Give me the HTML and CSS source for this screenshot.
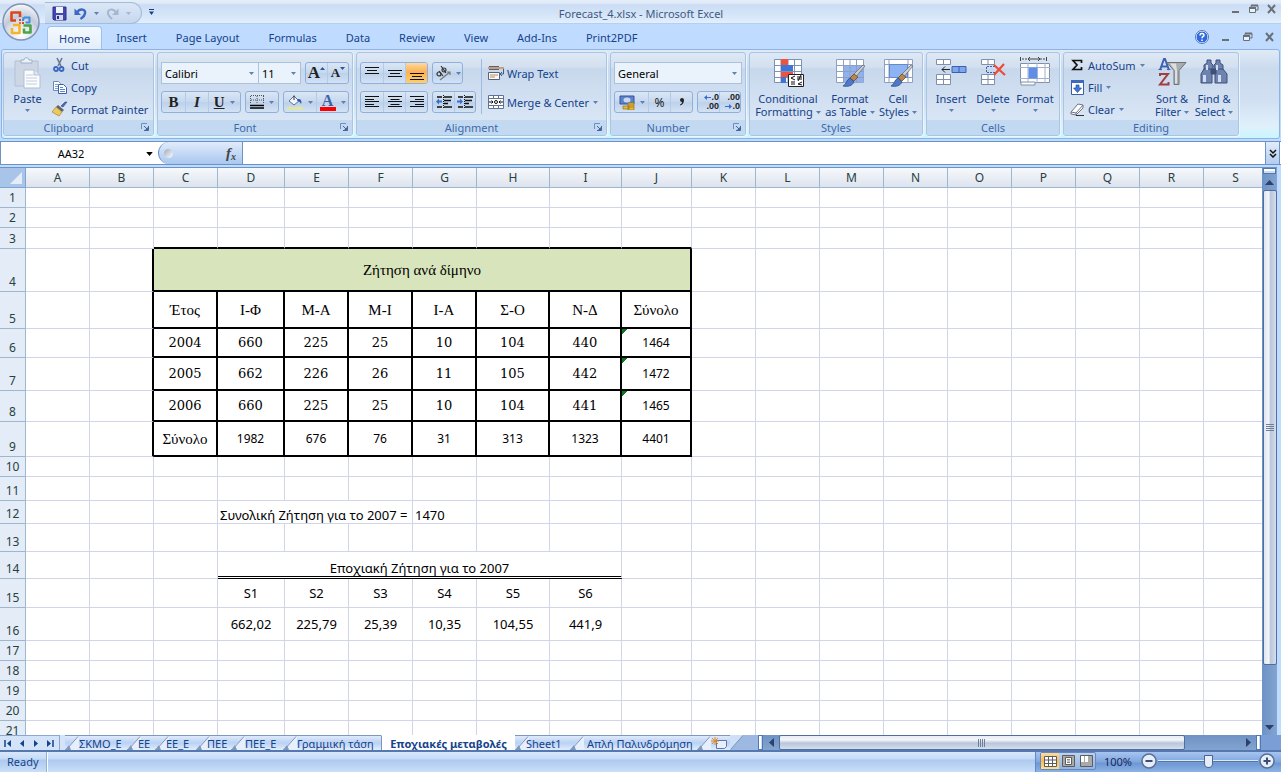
FILE: index.html
```html
<!DOCTYPE html>
<html lang="en">
<head>
<meta charset="utf-8">
<title>Forecast_4.xlsx - Microsoft Excel</title>
<link rel="stylesheet" href="styles.css">
</head>
<body>
<svg class="defs" width="0" height="0" aria-hidden="true">
  <symbol id="dn" viewBox="0 0 5 3"><path d="M0 0h5L2.500 3z" fill="currentColor"/></symbol>
  <symbol id="launch" viewBox="0 0 8 8"><path d="M.5 6V.5H6" fill="none" stroke="#6d8fc0"/><path d="M3 3l3 3M7.500 3v4.500H3" fill="none" stroke="#44679c"/><path d="M7 4v3H4z" fill="#44679c"/></symbol>
  <symbol id="min" viewBox="0 0 11 10"><path d="M2 8h7" stroke="#6b6f78" stroke-width="2"/></symbol>
  <symbol id="restore" viewBox="0 0 11 10"><path d="M3 3V1.500h7V6H8" fill="none" stroke="#6b6f78"/><path d="M1.500 4.500h6v4h-6z" fill="#e9f1fb" stroke="#6b6f78"/><path d="M3 1.500h7M1 4h7" stroke="#6b6f78" stroke-width="2"/></symbol>
  <symbol id="close" viewBox="0 0 11 10"><path d="M2 1l7 8M9 1L2 9" stroke="#6b6f78" stroke-width="2"/></symbol>
  <symbol id="brush" viewBox="0 0 32 32"><path d="M31 9l-11 13-3-2L29 8z" fill="#c9ccd2" stroke="#6a6f7a" stroke-width=".8"/><path d="M20 17l4 3-4 4-4-3z" fill="#b98650" stroke="#6f4a25" stroke-width=".8"/><path d="M16 21l4 4c-2 4-6 5-11 4 4-2 3-6 7-8z" fill="#4f79c8" stroke="#2b4c8c" stroke-width=".8"/></symbol>
  <symbol id="slash" viewBox="0 0 14 14"><path d="M0 14L13 .5h1V14z" fill="#e6effb"/><path d="M0 14l2-1L13 .5" fill="none" stroke="#7d97bf"/><path d="M0 14l4-5 2 5z" fill="#7e98c0"/></symbol>
  <symbol id="slashend" viewBox="0 0 14 14"><path d="M0 0h13L1 14H0z" fill="#cfe0f6"/><path d="M1 14L13 .5" stroke="#7d97bf"/></symbol>
</svg>

<div class="app">
  <header class="titlebar">
    <button class="orb" aria-label="Office Button">
      <svg width="38" height="38" viewBox="0 0 38 38">
        <defs><radialGradient id="og" cx=".5" cy=".85" r=".9"><stop offset="0" stop-color="#fff"/><stop offset=".45" stop-color="#d5dbe8"/><stop offset=".55" stop-color="#c3c9da"/><stop offset="1" stop-color="#fff"/></radialGradient></defs>
        <circle cx="19" cy="19" r="18" fill="url(#og)" stroke="#7f93b2" stroke-width="1.500"/>
        <g fill="none" stroke-width="2.600" stroke-linejoin="round">
          <path d="M14 17.500H9.500V9.500h8.500V14" stroke="#d9481c"/>
          <path d="M22 14.500h5.500v5H23.500M21.500 14v3" stroke="#3f8edc" stroke-width="2"/>
          <path d="M11 22h6.500v8H10v-5" stroke="#f4b52a"/>
          <path d="M21.500 22.500h7v7H22v-4" stroke="#4ba446"/>
        </g>
        <path d="M17 16h2v2h-2z" fill="#d9481c"/><path d="M20 16h2v2h-2z" fill="#3f8edc"/><path d="M17 19h2v2h-2z" fill="#e8701f"/><path d="M20 19h2v2h-2z" fill="#d9481c"/>
      </svg>
    </button>
    <div class="qat">
      <button aria-label="Save"><svg width="15" height="15" viewBox="0 0 15 15"><path d="M1 1h13v13H2l-1-1z" fill="#4546b0" stroke="#2f2f86"/><path d="M4 1h7v6H4z" fill="#eef3fd"/><path d="M4 9h7v5H4z" fill="#d4d8ee"/><path d="M5 10h2v3H5z" fill="#2f2f86"/></svg></button>
      <button aria-label="Undo"><svg width="13" height="13" viewBox="0 0 13 13"><path d="M3 5.500C6 1 12 2 11 6.500 10.500 9.500 8.500 10.500 6.500 12" fill="none" stroke="#3b68c4" stroke-width="2.400"/><path d="M.5 1.500v6.500H7z" fill="#3b68c4"/></svg></button>
      <button aria-label="Undo list" class="arr"><svg width="5" height="3"><use href="#dn"/></svg></button>
      <button aria-label="Redo" class="off"><svg width="13" height="13" viewBox="0 0 13 13"><path d="M10 5.500C7 1 1 2 2 6.500 2.500 9.500 4.500 10.500 6 12" fill="none" stroke="#a7b6cf" stroke-width="2"/><path d="M12.500 1.500v6.500H6z" fill="#a7b6cf"/></svg></button>
      <button aria-label="Redo list" class="arr off"><svg width="5" height="3"><use href="#dn"/></svg></button>
    </div>
    <button class="qatmore" aria-label="Customize"><svg width="5" height="6" viewBox="0 0 5 6"><path d="M0 .5h5" stroke="#15428b"/><path d="M0 2.500h5L2.500 6z" fill="#15428b"/></svg></button>
    <h1>Forecast_4.xlsx - Microsoft Excel</h1>
    <div class="winbtns">
      <button aria-label="Minimize"><svg width="11" height="10"><use href="#min"/></svg></button>
      <button aria-label="Restore"><svg width="11" height="10"><use href="#restore"/></svg></button>
      <button aria-label="Close"><svg width="11" height="10"><use href="#close"/></svg></button>
    </div>
  </header>

  <nav class="tabs">
    <button class="tab active">Home</button>
    <button class="tab">Insert</button>
    <button class="tab">Page Layout</button>
    <button class="tab">Formulas</button>
    <button class="tab">Data</button>
    <button class="tab">Review</button>
    <button class="tab">View</button>
    <button class="tab">Add-Ins</button>
    <button class="tab">Print2PDF</button>
    <div class="docbtns">
      <button aria-label="Help"><svg width="14" height="14" viewBox="0 0 14 14"><circle cx="7" cy="7" r="6" fill="#2f6be0" stroke="#fff"/><circle cx="7" cy="7" r="6.500" fill="none" stroke="#5578b5"/><path d="M5 5.500c0-3 4-2.500 4-.3C9 6.500 7 6.500 7 8.200" fill="none" stroke="#fff" stroke-width="1.500"/><path d="M6.200 9.500h1.600V11H6.200z" fill="#fff"/></svg></button>
      <button aria-label="Minimize window"><svg width="11" height="10"><use href="#min"/></svg></button>
      <button aria-label="Restore window"><svg width="11" height="10"><use href="#restore"/></svg></button>
      <button aria-label="Close window"><svg width="11" height="10"><use href="#close"/></svg></button>
    </div>
  </nav>

  <section class="ribbon">
    <div class="group g-clip">
      <div class="body">
        <button class="big">
          <svg width="32" height="32" viewBox="0 0 32 32"><path d="M3 4h23v25H3z" fill="#ccd6e5" stroke="#b4c1d5"/><path d="M9 6V3h3c0-3 5-3 5 0h3v3z" fill="#eef2f8" stroke="#9eafc8"/><path d="M12 13h10l6 5v13H12z" fill="#fbfcfe" stroke="#b3bfd2"/><path d="M22 13v5h6" fill="#dfe6f1" stroke="#b3bfd2"/><path d="M14 18h7M14 21h11M14 24h11M14 27h11" stroke="#c3cedf"/></svg>
          <span>Paste</span><svg class="caret" width="5" height="3"><use href="#dn"/></svg>
        </button>
        <div class="smalls">
          <button><svg width="16" height="16" viewBox="0 0 16 16"><path d="M5 1l4 8M10 1L6 9" stroke="#6a7890" stroke-width="1.600"/><circle cx="4" cy="12" r="2" fill="none" stroke="#3a66bd" stroke-width="1.800"/><circle cx="9.500" cy="12" r="2" fill="none" stroke="#3a66bd" stroke-width="1.800"/></svg>Cut</button>
          <button><svg width="16" height="16" viewBox="0 0 16 16"><path d="M1.500 2.500h5l2 2v7h-7z" fill="#fff" stroke="#6c87b8"/><path d="M3 5.500h3M3 7.500h4M3 9.500h4" stroke="#7fa0da"/><path d="M6.500 5.500h5l3 3v6h-8z" fill="#fff" stroke="#3f5fa8"/><path d="M8 8.500h3M8 10.500h5M8 12.500h5" stroke="#5b84d2"/></svg>Copy</button>
          <button><svg width="16" height="16" viewBox="0 0 16 16"><path d="M15 1l-4 5-2-1 4-4z" fill="#4c69b0" stroke="#2f4987" stroke-width=".6"/><path d="M6 4l6 5-2 2-6-5z" fill="#5b6378"/><path d="M4 6l6 5-3 4-7-4z" fill="#ecc95c" stroke="#a9832c" stroke-width=".7"/></svg>Format Painter</button>
        </div>
      </div>
      <footer>Clipboard<button aria-label="Clipboard options"><svg width="8" height="8"><use href="#launch"/></svg></button></footer>
    </div>

    <div class="group g-font">
      <div class="body rows">
        <div class="row">
          <div class="combos">
            <label class="combo"><select aria-label="Font"><option>Calibri</option></select><svg width="5" height="3"><use href="#dn"/></svg></label>
            <label class="combo size"><select aria-label="Font size"><option>11</option></select><svg width="5" height="3"><use href="#dn"/></svg></label>
          </div>
          <div class="set"><button class="glyph grow" aria-label="Grow font">A<svg width="5" height="3" viewBox="0 0 5 3"><path d="M0 3h5L2.500 0z" fill="#2f5597"/></svg></button><button class="glyph shrink" aria-label="Shrink font">A<svg width="5" height="3" viewBox="0 0 5 3"><path d="M0 0h5L2.500 3z" fill="#2f5597"/></svg></button></div>
        </div>
        <div class="row">
          <div class="set biu"><button class="glyph"><b>B</b></button><button class="glyph"><i>I</i></button><button class="glyph split"><u>U</u><svg width="5" height="3"><use href="#dn"/></svg></button></div>
          <div class="set"><button class="w34 split" aria-label="Borders"><svg width="14" height="14" viewBox="0 0 14 14"><path d="M.5 1v8M7 1v8M13.500 1v8M1 .5h13M1 5h13" stroke="#555" stroke-dasharray="1 1"/><path d="M0 10.500h14M0 13h14" stroke="#000" stroke-width="1.500"/></svg><svg width="5" height="3"><use href="#dn"/></svg></button></div>
          <div class="set"><button class="w33 split" aria-label="Fill color"><svg width="16" height="16" viewBox="0 0 16 16"><path d="M2 7l5-5 5 5-5 4z" fill="#f2f6fc" stroke="#5b7294"/><path d="M7 6V1.500" stroke="#333"/><path d="M11 5c3 0 4 2 3 5-1-2-2-3-4-3z" fill="#2e59b4"/><path d="M0 13h16v3H0z" fill="#dfe7a4"/></svg><svg width="5" height="3"><use href="#dn"/></svg></button><button class="w33 split fontcolor" aria-label="Font color"><span>A</span><svg width="5" height="3"><use href="#dn"/></svg></button></div>
        </div>
      </div>
      <footer>Font<button aria-label="Font options"><svg width="8" height="8"><use href="#launch"/></svg></button></footer>
    </div>

    <div class="group g-align">
      <div class="body">
        <div class="rows">
          <div class="row">
            <div class="set w23"><button aria-label="Top align"><svg width="14" height="16" viewBox="0 0 14 16"><path d="M0 2.500h14M2 5.500h10M0 8.500h14" stroke="#111"/></svg></button><button aria-label="Middle align"><svg width="14" height="16" viewBox="0 0 14 16"><path d="M0 5.500h14M2 8.500h10M0 11.500h14" stroke="#111"/></svg></button><button class="on" aria-label="Bottom align"><svg width="14" height="16" viewBox="0 0 14 16"><path d="M0 8.500h14M2 11.500h10M0 14.500h14" stroke="#111"/></svg></button></div>
            <div class="set"><button class="w30 split" aria-label="Orientation"><svg width="16" height="16" viewBox="0 0 16 16"><g fill="none" stroke="#333" stroke-width="1.200"><circle cx="4" cy="9" r="2"/><path d="M4 6l4 5M6 1l5 7"/><circle cx="9" cy="5" r="2"/><path d="M5 15L15 7M15 10V7h-3" stroke="#777"/></g></svg><svg width="5" height="3"><use href="#dn"/></svg></button></div>
          </div>
          <div class="row">
            <div class="set w23"><button aria-label="Align left"><svg width="14" height="14" viewBox="0 0 14 14"><path d="M0 1.500h14M0 4.500h9M0 6.500h14M0 9.500h9M0 11.500h14" stroke="#111"/></svg></button><button aria-label="Center"><svg width="14" height="14" viewBox="0 0 14 14"><path d="M0 1.500h14M2.500 4.500h9M0 6.500h14M2.500 9.500h9M0 11.500h14" stroke="#111"/></svg></button><button aria-label="Align right"><svg width="14" height="14" viewBox="0 0 14 14"><path d="M0 1.500h14M5 4.500h9M0 6.500h14M5 9.500h9M0 11.500h14" stroke="#111"/></svg></button></div>
            <div class="set w22"><button aria-label="Decrease indent"><svg width="16" height="14" viewBox="0 0 16 14"><path d="M1 2h5M8 2h8M8 5.500h7M8 8.500h4M1 12h5M8 12h8" stroke="#111" stroke-width="1.500"/><path d="M7.500 0v14" stroke="#111" stroke-dasharray="1 1"/><path d="M0 6.500l3-3v2h3v2H3v2z" fill="#3c6cd0"/></svg></button><button aria-label="Increase indent"><svg width="16" height="14" viewBox="0 0 16 14"><path d="M1 2h5M8 2h8M8 5.500h7M8 8.500h4M1 12h5M8 12h8" stroke="#111" stroke-width="1.500"/><path d="M7.500 0v14" stroke="#111" stroke-dasharray="1 1"/><path d="M6 6.500l-3-3v2H0v2h3v2z" fill="#3c6cd0"/></svg></button></div>
          </div>
        </div>
        <div class="texts">
          <button><svg width="16" height="16" viewBox="0 0 16 16"><path d="M1 1.500h10M1 4.500h10" stroke="#55617a"/><path d="M0 3h16" stroke="#c58a4c" stroke-width="1.500"/><path d="M.5 7.500h11v7H.5z" fill="#f6f8fb" stroke="#55617a"/><path d="M2 10h8M2 12h5" stroke="#c58a4c"/><path d="M15.500 4v5h-3M14 7l-2 2 2 2" fill="none" stroke="#3f5b8c"/></svg>Wrap Text</button>
          <button><svg width="16" height="16" viewBox="0 0 16 16"><path d="M.5 1.500h15v13H.5z" fill="#fff" stroke="#5c7299"/><path d="M0 4.500h16M0 11.500h16M5.500 1v3M10.500 1v3M5.500 12v3M10.500 12v3" stroke="#5c7299"/><path d="M1 8h4M15 8h-4M3.500 6.500L5 8 3.500 9.500M12.500 6.500L11 8l1.500 1.500" fill="none" stroke="#111"/><circle cx="8" cy="8" r="1.500" fill="none" stroke="#111"/></svg>Merge &amp; Center<svg class="gapl" width="5" height="3"><use href="#dn"/></svg></button>
        </div>
      </div>
      <footer>Alignment<button aria-label="Alignment options"><svg width="8" height="8"><use href="#launch"/></svg></button></footer>
    </div>

    <div class="group g-num">
      <div class="body rows">
        <label class="combo full"><select aria-label="Number format"><option>General</option></select><svg width="5" height="3"><use href="#dn"/></svg></label>
        <div class="row">
          <div class="set"><button class="w34 split" aria-label="Accounting format"><svg width="16" height="16" viewBox="0 0 16 16"><path d="M1 2h14v8H1z" fill="#5e83c9" stroke="#33559d"/><ellipse cx="8" cy="6" rx="3.500" ry="2.500" fill="#c8d8f2"/><path d="M9 9h6v7H9zM4 12h6v3H4z" fill="#e9b93a" stroke="#9a7313" stroke-width=".7"/><path d="M9 11h6M9 13h6" stroke="#9a7313" stroke-width=".7"/></svg><svg width="5" height="3"><use href="#dn"/></svg></button><button class="w22b pct">%</button><button class="w22b" aria-label="Comma style"><svg width="6" height="8" viewBox="0 0 6 8"><path d="M3 0a2 2 0 0 1 2 2C5 4.500 4 6.500 1.500 7.500L1 6.500C2.500 6 3 5 3 4A2 2 0 0 1 3 0z" fill="#222"/></svg></button></div>
          <div class="set w22"><button class="dec" aria-label="Increase decimal"><span><svg width="7" height="5" viewBox="0 0 7 5"><path d="M0 2.500L3 0v2h4v1H3v2z" fill="#3c6cd0"/></svg>.0</span><span>.00</span></button><button class="dec" aria-label="Decrease decimal"><span>.00</span><span><svg width="7" height="5" viewBox="0 0 7 5"><path d="M7 2.500L4 0v2H0v1h4v2z" fill="#3c6cd0"/></svg>.0</span></button></div>
        </div>
      </div>
      <footer>Number<button aria-label="Number options"><svg width="8" height="8"><use href="#launch"/></svg></button></footer>
    </div>

    <div class="group g-styles">
      <div class="body">
        <button class="big">
          <svg width="32" height="32" viewBox="0 0 32 32"><path d="M2.500 2.500h27v23h-27z" fill="#fff" stroke="#7d90b5"/><path d="M9 2v24M16 2v24M22.500 2v24M2 8.500h28M2 14.500h28M2 20.500h28" stroke="#7d90b5"/><path d="M9 2h7v6H9zM9 15h12v5H9z" fill="#ee5340"/><path d="M9 8h12v6H9zM9 20h5v6H9z" fill="#3f74d8"/><path d="M16.500 17.500h15v12h-15z" fill="#fff" stroke="#222"/><path d="M23 19l-4 2 4 2M19 25h4M19 27h4M25 20h5M25 22h5M29 18l-3 6M30 25l-4 2 4 1" fill="none" stroke="#111"/></svg>
          <span>Conditional<br>Formatting <svg width="5" height="3"><use href="#dn"/></svg></span>
        </button>
        <button class="big w54">
          <svg width="32" height="32" viewBox="0 0 32 32"><path d="M2.500 2.500h27v23h-27z" fill="#fff" stroke="#8ea0c2"/><path d="M9.500 8.500h20v17h-20z" fill="#8fb2ee"/><path d="M9.500 2v24M16 2v24M22.500 2v24M2 8.500h28M2 14.500h28M2 20.500h28" stroke="#8ea0c2"/><use href="#brush"/></svg>
          <span>Format<br>as Table <svg width="5" height="3"><use href="#dn"/></svg></span>
        </button>
        <button class="big">
          <svg width="32" height="32" viewBox="0 0 32 32"><path d="M2.500 2.500h28v23h-28z" fill="#fff" stroke="#8ea0c2"/><path d="M7 2v24M26 2v24M2 7.500h29M2 20.500h29" stroke="#8ea0c2"/><path d="M7.500 7.500h18v13h-18z" fill="#8db3f3" stroke="#6588c6"/><use href="#brush"/></svg>
          <span>Cell<br>Styles <svg width="5" height="3"><use href="#dn"/></svg></span>
        </button>
      </div>
      <footer>Styles</footer>
    </div>

    <div class="group g-cells">
      <div class="body">
        <button class="big w42"><svg width="32" height="32" viewBox="0 0 32 32"><path d="M1.500 2.500h14v5h-14zM1.500 17.500h14v10h-14z" fill="#fff" stroke="#8090ab"/><path d="M8.500 2v5M8.500 17v11M1 22.500h15" stroke="#8090ab"/><path d="M17 9.500h14v6H17z" fill="#7fa6ec" stroke="#3a5fae"/><path d="M24 9v7" stroke="#3a5fae"/><path d="M15 12.500H7M10 9.500l-3 3 3 3" fill="none" stroke="#222"/></svg><span>Insert</span><svg class="caret" width="5" height="3"><use href="#dn"/></svg></button>
        <button class="big w42"><svg width="32" height="32" viewBox="0 0 32 32"><path d="M4.500 2.500h13v5h-13zM4.500 17.500h13v10h-13z" fill="#fff" stroke="#8090ab"/><path d="M11 2v5M11 17v11M4 22.500h14" stroke="#8090ab"/><path d="M18 9.500H9.500v6H18" fill="none" stroke="#3a5fae" stroke-dasharray="2 1"/><path d="M17 8l11 10M27 7L17 18" stroke="#ee4a36" stroke-width="2.200"/></svg><span>Delete</span><svg class="caret" width="5" height="3"><use href="#dn"/></svg></button>
        <button class="big w42"><svg width="32" height="32" viewBox="0 0 32 32"><path d="M1.500 0v4M27.500 0v4" stroke="#444"/><path d="M3 2h7M21 2h6" stroke="#444" stroke-dasharray="2 1"/><path d="M9 2h12M11 0L9 2l2 2M19 0l2 2-2 2" fill="none" stroke="#444"/><path d="M1.500 6.500h29v19h-29z" fill="#fff" stroke="#8090ab"/><path d="M2 28h14v-3h-14z" fill="#fff" stroke="#8090ab"/><path d="M9 6v20M18 6v20M26 6v20M1 10.500h30M1 21.500h30" stroke="#a3b2cf"/><path d="M9.500 10.500h9v11h-9z" fill="#5f8ee4"/></svg><span>Format</span><svg class="caret" width="5" height="3"><use href="#dn"/></svg></button>
      </div>
      <footer>Cells</footer>
    </div>

    <div class="group g-edit">
      <div class="body">
        <div class="smalls">
          <button><svg width="16" height="16" viewBox="0 0 16 16"><path d="M12.500 6V3.500H4L8 8l-4 4.500h8.500V10" fill="none" stroke="#111" stroke-width="1.700"/></svg>AutoSum<svg class="gapl" width="5" height="3"><use href="#dn"/></svg></button>
          <button><svg width="16" height="16" viewBox="0 0 16 16"><path d="M2.500 1.500h12v14h-12z" fill="#fff" stroke="#3e5f9e"/><path d="M2 1h13v3H2z" fill="#3f69bd"/><path d="M7 6h3v3h2.500l-4 4.500-4-4.500H7z" fill="#3f77de" stroke="#2a4f9c" stroke-width=".7"/></svg>Fill<svg class="gapl" width="5" height="3"><use href="#dn"/></svg></button>
          <button><svg width="16" height="16" viewBox="0 0 16 16"><path d="M2 11l7-8 5 1v3l-7 7-5-1z" fill="#fff" stroke="#6c7587"/><path d="M2 11l5 1 7-8M7 12v2" fill="none" stroke="#6c7587"/><path d="M7 14.500h8" stroke="#333"/></svg>Clear<svg class="gapl" width="5" height="3"><use href="#dn"/></svg></button>
        </div>
        <button class="big w42">
          <svg width="32" height="32" viewBox="0 0 32 32"><path d="M4 13L8 2h1l4 11M5 9.500h6.500" fill="none" stroke="#3d63b0" stroke-width="2"/><path d="M2.500 12.500H6M11 12.500h3.500" stroke="#3d63b0"/><path d="M4 19v-2h8L4 27.500h8.500V25" fill="none" stroke="#a33c40" stroke-width="2"/><path d="M11 5.500h19l-7 8v14h-5v-14z" fill="#a9acb0" stroke="#6e7277"/><path d="M14 6.500h6l1 7v13h-2v-13z" fill="#dcdee0"/></svg>
          <span>Sort &amp;<br>Filter <svg width="5" height="3"><use href="#dn"/></svg></span>
        </button>
        <button class="big w42">
          <svg width="32" height="32" viewBox="0 0 32 32"><g fill="#6e83b0" stroke="#3f5078"><path d="M9 3h4v3l2 2v7H6V8l3-2zM18 3h4v3l3 2v7h-9V8l2-2z"/><path d="M3 17l3-5h8v14H3zM17 12h8l4 5v9H17z"/><path d="M13 12h5v5h-5z" fill="#3f5078"/></g><path d="M5 18h3v7H5zM20 18h3v7h-3zM8 8h2v5H8zM18 8h2v5h-2z" fill="#d3dcee"/></svg>
          <span>Find &amp;<br>Select <svg width="5" height="3"><use href="#dn"/></svg></span>
        </button>
      </div>
      <footer>Editing</footer>
    </div>
  </section>

  <div class="formulabar">
    <label class="namebox"><input type="text" value="AA32" aria-label="Name Box"><svg width="7" height="4" viewBox="0 0 5 3"><use href="#dn"/></svg></label>
    <div class="fx"><span class="knob"></span><button aria-label="Insert Function"><i>f<sub>x</sub></i></button></div>
    <input class="formula" type="text" aria-label="Formula">
    <button class="expand" aria-label="Expand formula bar"><svg width="8" height="9" viewBox="0 0 8 9"><path d="M1 1l3 3 3-3M1 5l3 3 3-3" fill="none" stroke="#111" stroke-width="1.500"/></svg></button>
  </div>

  <main class="sheet">
    <div class="gridwrap">
      <table class="grid">
        <colgroup><col class="ch"><col span="3"><col class="c67"><col span="3"><col class="c73"><col class="c72"><col class="c70"><col span="9"></colgroup>
        <thead><tr><th class="corner"><svg width="12" height="12" viewBox="0 0 12 12"><path d="M12 0v12H0z" fill="#e4ecf7"/></svg></th><th>A<th>B<th>C<th>D<th>E<th>F<th>G<th>H<th>I<th>J<th>K<th>L<th>M<th>N<th>O<th>P<th>Q<th>R<th>S</tr></thead>
        <tbody>
        <tr class="h20"><th>1<td><td><td><td><td><td><td><td><td><td><td><td><td><td><td><td><td><td><td></tr>
        <tr class="h20"><th>2<td><td><td><td><td><td><td><td><td><td><td><td><td><td><td><td><td><td><td></tr>
        <tr class="h21"><th>3<td><td><td class="t"><td class="t"><td class="t"><td class="t"><td class="t"><td class="t"><td class="t"><td class="t"><td><td><td><td><td><td><td><td><td></tr>
        <tr class="h43"><th>4<td><td class="edge"><td colspan="8" class="k title">Ζήτηση ανά δίμηνο<td><td><td><td><td><td><td><td><td></tr>
        <tr class="h37 head"><th>5<td><td class="edge"><td class="k">Έτος<td class="k">Ι-Φ<td class="k">Μ-Α<td class="k">Μ-Ι<td class="k">Ι-Α<td class="k">Σ-Ο<td class="k">Ν-Δ<td class="k">Σύνολο<td><td><td><td><td><td><td><td><td></tr>
        <tr class="h29"><th>6<td><td class="edge"><td class="k">2004<td class="k">660<td class="k">225<td class="k">25<td class="k">10<td class="k">104<td class="k">440<td class="k sum flag">1464<td><td><td><td><td><td><td><td><td></tr>
        <tr class="h33"><th>7<td><td class="edge"><td class="k">2005<td class="k">662<td class="k">226<td class="k">26<td class="k">11<td class="k">105<td class="k">442<td class="k sum flag">1472<td><td><td><td><td><td><td><td><td></tr>
        <tr class="h31"><th>8<td><td class="edge"><td class="k">2006<td class="k">660<td class="k">225<td class="k">25<td class="k">10<td class="k">104<td class="k">441<td class="k sum flag">1465<td><td><td><td><td><td><td><td><td></tr>
        <tr class="h35"><th>9<td><td class="edge"><td class="k name">Σύνολο<td class="k sum">1982<td class="k sum">676<td class="k sum">76<td class="k sum">31<td class="k sum">313<td class="k sum">1323<td class="k sum">4401<td><td><td><td><td><td><td><td><td></tr>
        <tr class="h20"><th>10<td><td><td><td><td><td><td><td><td><td><td><td><td><td><td><td><td><td><td></tr>
        <tr class="h24"><th>11<td><td><td><td><td><td><td><td><td><td><td><td><td><td><td><td><td><td><td></tr>
        <tr class="h23"><th>12<td><td><td><td colspan="3" class="v left">Συνολική Ζήτηση για το 2007 =<td class="v left">1470<td><td><td><td><td><td><td><td><td><td><td><td></tr>
        <tr class="h28"><th>13<td><td><td><td><td><td><td><td><td><td><td><td><td><td><td><td><td><td><td></tr>
        <tr class="h27"><th>14<td><td><td><td colspan="6" class="v dbl">Εποχιακή Ζήτηση για το 2007<td><td><td><td><td><td><td><td><td><td></tr>
        <tr class="h29"><th>15<td><td><td><td class="v">S1<td class="v">S2<td class="v">S3<td class="v">S4<td class="v">S5<td class="v">S6<td><td><td><td><td><td><td><td><td><td></tr>
        <tr class="h33"><th>16<td><td><td><td class="v">662,02<td class="v">225,79<td class="v">25,39<td class="v">10,35<td class="v">104,55<td class="v">441,9<td><td><td><td><td><td><td><td><td><td></tr>
        <tr class="h20"><th>17<td><td><td><td><td><td><td><td><td><td><td><td><td><td><td><td><td><td><td></tr>
        <tr class="h20"><th>18<td><td><td><td><td><td><td><td><td><td><td><td><td><td><td><td><td><td><td></tr>
        <tr class="h20"><th>19<td><td><td><td><td><td><td><td><td><td><td><td><td><td><td><td><td><td><td></tr>
        <tr class="h20"><th>20<td><td><td><td><td><td><td><td><td><td><td><td><td><td><td><td><td><td><td></tr>
        <tr class="h20"><th>21<td><td><td><td><td><td><td><td><td><td><td><td><td><td><td><td><td><td><td></tr>
        </tbody>
      </table>
    </div>
    <div class="vscroll">
      <span class="vsplit"></span>
      <button aria-label="Scroll up"><svg width="9" height="5" viewBox="0 0 9 5"><path d="M0 5h9L4.500 0z" fill="#2d3f6b"/></svg></button>
      <div class="vtrack"><div class="vthumb"><i class="grip"></i></div></div>
      <button aria-label="Scroll down"><svg width="9" height="5" viewBox="0 0 9 5"><path d="M0 0h9L4.500 5z" fill="#2d3f6b"/></svg></button>
    </div>
  </main>

  <div class="sheetbar">
    <div class="navs">
      <button aria-label="First sheet"><svg width="8" height="7" viewBox="0 0 8 7"><path d="M1 0v7" stroke="#15428b" stroke-width="1.500"/><path d="M7 0v7L3 3.500z" fill="#15428b"/></svg></button>
      <button aria-label="Previous sheet"><svg width="8" height="7" viewBox="0 0 8 7"><path d="M6 0v7L2 3.500z" fill="#15428b"/></svg></button>
      <button aria-label="Next sheet"><svg width="8" height="7" viewBox="0 0 8 7"><path d="M2 0v7l4-3.500z" fill="#15428b"/></svg></button>
      <button aria-label="Last sheet"><svg width="8" height="7" viewBox="0 0 8 7"><path d="M7 0v7" stroke="#15428b" stroke-width="1.500"/><path d="M1 0v7l4-3.500z" fill="#15428b"/></svg></button>
    </div>
    <div class="stabs">
      <button class="s62"><svg width="14" height="14"><use href="#slash"/></svg>ΣΚΜΟ_Ε</button>
      <button class="s28"><svg width="14" height="14"><use href="#slash"/></svg>ΕΕ</button>
      <button class="s41"><svg width="14" height="14"><use href="#slash"/></svg>ΕΕ_Ε</button>
      <button class="s35"><svg width="14" height="14"><use href="#slash"/></svg>ΠΕΕ</button>
      <button class="s52"><svg width="14" height="14"><use href="#slash"/></svg>ΠΕΕ_Ε</button>
      <button class="s98"><svg width="14" height="14"><use href="#slash"/></svg>Γραμμική τάση</button>
      <button class="s134 current">Εποχιακές μεταβολές</button>
      <button class="s55"><svg width="14" height="14"><use href="#slash"/></svg>Sheet1</button>
      <button class="s127"><svg width="14" height="14"><use href="#slash"/></svg>Απλή Παλινδρόμηση</button>
      <button class="s33" aria-label="Insert worksheet"><svg width="14" height="14"><use href="#slash"/></svg><svg class="new" width="16" height="13" viewBox="0 0 16 13"><path d="M5.500 3.500h10v6l-2 2h-8z" fill="#e9effa" stroke="#5c77a8"/><path d="M4 0v8M0 4h8M1 1l6 6M7 1L1 7" stroke="#e08a2b"/></svg></button>
      <svg width="14" height="14"><use href="#slashend"/></svg>
    </div>
    <div class="hscroll">
      <span class="hsplit"></span>
      <button aria-label="Scroll left"><svg width="5" height="9" viewBox="0 0 5 9"><path d="M5 0v9L0 4.500z" fill="#2d3f6b"/></svg></button>
      <div class="htrack"><div class="hthumb"><i class="grip"></i></div></div>
      <button aria-label="Scroll right"><svg width="5" height="9" viewBox="0 0 5 9"><path d="M0 0v9l5-4.500z" fill="#2d3f6b"/></svg></button>
      <span class="hsplit"></span>
    </div>
  </div>

  <footer class="status">
    <span class="ready">Ready</span><span class="fillbar"></span>
    <div class="statright">
      <div class="views">
        <button class="on" aria-label="Normal"><svg width="13" height="11" viewBox="0 0 13 11"><path d="M.5.5h12v10H.5z" fill="#fff" stroke="#5d5d5d"/><path d="M4.500 0v11M8.500 0v11M0 4h13M0 7.500h13" stroke="#5d5d5d"/></svg></button>
        <button aria-label="Page Layout"><svg width="13" height="12" viewBox="0 0 13 12"><path d="M.5.5h12v11H.5z" fill="#a9a9a9" stroke="#5d5d5d"/><path d="M3.500 2.500h6v7h-6z" fill="#fff" stroke="#5d5d5d"/><path d="M5 4.500h3M5 6h3M5 7.500h3" stroke="#888"/></svg></button>
        <button aria-label="Page Break Preview"><svg width="13" height="12" viewBox="0 0 13 12"><path d="M.5.5h12v11H.5z" fill="#a9a9a9" stroke="#5d5d5d"/><path d="M1 1h3v6H1zM5 1h3v6H5z" fill="#fff"/></svg></button>
      </div>
      <button class="pc">100%</button>
      <button class="zb" aria-label="Zoom out"><svg width="16" height="16" viewBox="0 0 16 16"><circle cx="8" cy="8" r="7" fill="#e6eefa" stroke="#5a6d92" stroke-width="1.500"/><path d="M4.500 8h7" stroke="#3b4d74" stroke-width="2"/></svg></button>
      <input type="range" min="0" max="100" value="50" aria-label="Zoom">
      <button class="zb" aria-label="Zoom in"><svg width="16" height="16" viewBox="0 0 16 16"><circle cx="8" cy="8" r="7" fill="#e6eefa" stroke="#5a6d92" stroke-width="1.500"/><path d="M4.500 8h7M8 4.500v7" stroke="#3b4d74" stroke-width="2"/></svg></button>
    </div>
  </footer>
</div>
</body>
</html>
```
FILE: styles.css
```css
* { box-sizing: border-box; }
body { margin: 0; background: #fff; color: #15428b; font: 11px/13px "Noto Sans", "Open Sans", sans-serif; }
.defs { position: absolute; }
button { display: flex; align-items: center; justify-content: center; margin: 0; padding: 0; border: 0; background: none; color: inherit; font: inherit; white-space: nowrap; }
svg { flex: none; display: block; }
.app { display: flex; flex-direction: column; height: 100vh; overflow: hidden; background: #bfdbff; }

.titlebar { position: relative; display: flex; align-items: center; flex: none; height: 24px; padding: 0 4px 0 45px; background: linear-gradient(#e6eef9 0, #dfeaf9 3px, #cbddf4 5px, #d9e8fa 18px, #e6f1fe 24px); border-bottom: 1px solid #b4d0f0; }
.orb { position: absolute; left: 2px; top: 3px; z-index: 2; }
.qat { display: flex; align-items: center; align-self: flex-start; gap: 7px; height: 22px; margin-top: 2px; padding: 0 10px 0 7px; border: 1px solid #a3bddd; border-left: 0; border-radius: 0 11px 11px 0; background: linear-gradient(#dbe7f6, #c6d8ef); }
.qat .arr { color: #5e80b5; }
.qat .off { color: #a7b6cf; }
.qatmore { margin-left: 7px; }
.titlebar h1 { flex: 1; margin: 4px 0 0; padding-right: 102px; text-align: center; font-size: 11px; font-weight: 400; color: #3f5a80; }
.winbtns, .docbtns { display: flex; gap: 7px; }
.winbtns { margin-top: -6px; }

.tabs { display: flex; align-items: flex-end; flex: none; height: 25px; padding: 0 6px 0 47px; background: #bfdbff; }
.tab { height: 23px; padding: 0 15px 0 14px; }
.tab.active { padding: 0 11px; border: 1px solid #9fc1e8; border-bottom: 0; border-radius: 4px 4px 0 0; background: linear-gradient(#f3f9ff, #e3eefb); }
.docbtns { align-self: center; align-items: center; margin-left: auto; gap: 11px; }

.ribbon { display: flex; gap: 3px; flex: none; height: 90px; margin: 0 1px; padding: 2px 1px; border: 1px solid #8db2e3; border-radius: 3px; background: linear-gradient(#e0eaf6, #cbdbee 18px, #d0e0f2 50px, #e0f0fb 76px, #c9f6ff); }
.group { display: flex; flex-direction: column; flex: none; border: 1px solid #a8c5e4; border-radius: 3px; background: linear-gradient(#dee8f5 0, #d4e0f0 14px, #c8d8ec 16px, #d9e6f5 69px); box-shadow: 1px 1px 0 #eaf5ff; }
.g-clip { width: 151px; }
.g-font { width: 196px; }
.g-align { width: 251px; }
.g-num { width: 136px; }
.g-styles { width: 174px; }
.g-cells { width: 134px; }
.g-edit { width: 176px; }
.group > footer { display: flex; position: relative; justify-content: center; align-items: center; flex: none; height: 15px; padding-right: 20px; border-radius: 0 0 2px 2px; background: #c2d9f1; color: #3e6aaa; }
.g-styles > footer, .g-cells > footer, .g-edit > footer { padding: 0; }
.group > footer button { position: absolute; right: 4px; top: 3px; }
.body { display: flex; flex: 1; padding: 0 3px; color: #15428b; }
.body use[href="#dn"] { color: #5e80b5; }
.rows { display: flex; flex-direction: column; gap: 7px; padding-top: 9px; }
.row { display: flex; gap: 4px; }
.big { display: flex; flex-direction: column; justify-content: flex-start; flex: 1 1 auto; padding-top: 4px; }
.big > span { margin-top: 3px; text-align: center; }
.big > span svg { display: inline-block; vertical-align: 2px; }
.caret { margin-top: 4px; }
.w42 { flex: 0 0 42px; }
.w54 { flex: 0 0 54px; }
.g-clip .big { flex: 0 0 41px; }
.smalls { display: flex; flex-direction: column; flex: 1; padding: 1px 0 0 4px; }
.smalls button { justify-content: flex-start; gap: 3px; height: 22px; }
.g-edit .smalls { padding-left: 2px; }
.gapl { margin-left: 1px; }
.combos { display: flex; }
.combo { position: relative; display: block; width: 98px; height: 22px; border: 1px solid #abc1de; background: #eaf2fb; }
.combo.size { width: 43px; margin-left: -1px; }
.combo.full { width: 128px; }
.combo select { width: 100%; height: 100%; padding: 0 3px; border: 0; appearance: none; background: none; color: #000; font: inherit; }
.combo svg { position: absolute; right: 4px; top: 9px; }
.set { display: flex; height: 22px; border: 1px solid #8fb0dc; border-radius: 3px; background: linear-gradient(#dae6f4, #c6d8ee 50%, #bdd1eb 52%, #d3e2f4); overflow: hidden; }
.set button { position: relative; }
.set button + button { border-left: 1px solid #b3cbe8; }
.split { gap: 5px; }
.glyph { width: 22px; color: #222; font: 700 15px "Liberation Serif", serif; }
.glyph.grow { font-size: 17px; }
.glyph.shrink { font-size: 13px; }
.glyph.grow svg, .glyph.shrink svg { align-self: flex-start; margin-top: 4px; }
.glyph.grow, .glyph.shrink { width: 21px; }
.biu .glyph { width: 23px; }
.biu .glyph.split { width: 32px; }
.w34 { width: 33px; }
.w33 { width: 32px; }
.w30 { width: 29px; }
.w23 button { width: 22px; }
.w22 button { width: 21px; }
.w22b { width: 22px; color: #222; }
.pct { font-size: 12px; }
.fontcolor span { width: 16px; height: 17px; border-bottom: 4px solid red; color: #3b62a5; font: 700 16px/14px "Liberation Serif", serif; text-align: center; }
.set .on { background: linear-gradient(#fcd9a3, #fdb04f 45%, #fdd06c); }
.dec { flex-direction: column; align-items: flex-end; color: #222; font: 700 9px/9px "Liberation Sans", sans-serif; }
.dec span { display: flex; align-items: center; justify-content: flex-end; }
.texts { display: flex; flex-direction: column; gap: 7px; height: 55px; margin: 6px 0 0 5px; padding: 3px 0 0 6px; border-left: 1px solid #9dbbe0; }
.texts button { justify-content: flex-start; gap: 3px; height: 22px; }

.formulabar { display: flex; flex: none; height: 24px; margin-top: 2px; border: 1px solid #6b93c5; border-width: 1px 0; background: #fff; }
.namebox { position: relative; width: 158px; flex: none; border-left: 1px solid #6b93c5; }
.namebox input { width: 140px; height: 100%; padding: 0; border: 0; outline: 0; background: none; text-align: center; color: #000; font: inherit; }
.namebox svg { position: absolute; right: 5px; top: 10px; color: #000; }
.fx { display: flex; align-items: center; justify-content: space-between; width: 85px; flex: none; padding: 0 6px 0 5px; border: 1px solid #6b93c5; border-width: 0 1px; border-radius: 11px 0 0 11px; background: linear-gradient(#e1ecfa, #a9c7f0); }
.knob { width: 9px; height: 9px; border-radius: 50%; background: linear-gradient(135deg, #9ea9bd, #fff); }
.fx i { color: #444; font: italic 700 15px "Liberation Serif", serif; }
.fx sub { font-size: 10px; vertical-align: -2px; }
.formula { flex: 1; min-width: 0; border: 0; outline: 0; background: #fff; }
.expand { width: 15px; margin-right: 1px; border: 1px solid #6b93c5; border-width: 0 1px; background: linear-gradient(#e1ecfa, #b4cdf0); }

.sheet { display: flex; flex: 1; min-height: 0; margin: 2px 4px 0 0; border-top: 1px solid #6b93c5; }
.gridwrap { flex: 1; min-width: 0; overflow: hidden; background: #fff; }
.grid { table-layout: fixed; width: 1268px; border-spacing: 0; color: #000; }
.grid col { width: 64px; }
.grid .ch { width: 26px; }
.grid .c67 { width: 67px; }
.grid .c73 { width: 73px; }
.grid .c72 { width: 72px; }
.grid .c70 { width: 70px; }
.grid td, .grid th { padding: 0; border: solid #d0d5e9; border-width: 0 1px 1px 0; text-align: center; overflow: hidden; white-space: nowrap; }
.grid th { font-weight: 400; font-size: 12px; line-height: 16px; color: #27413e; }
.grid thead th { height: 20px; border-color: #9eb6ce; background: linear-gradient(#f6f9fc, #dde3ee); }
.grid thead .corner { background: #a9c4e9; border-color: #7fa3d3; }
.corner svg { margin: 0 3px 0 auto; }
.grid tbody th { padding-bottom: 1px; border-color: #9eb6ce; background: #e4ecf7; vertical-align: bottom; }
.h20 { height: 20px; }
.h21 { height: 21px; }
.h23 { height: 23px; }
.h24 { height: 24px; }
.h27 { height: 27px; }
.h28 { height: 28px; }
.h29 { height: 29px; }
.h31 { height: 31px; }
.h33 { height: 33px; }
.h35 { height: 35px; }
.h37 { height: 37px; }
.h43 { height: 43px; }
.grid .t { border-bottom: 2px solid #000; }
.grid .edge { border-right: 2px solid #000; }
.grid .k { border: solid #000; border-width: 0 2px 2px 0; font: 13px/18px "DejaVu Serif", serif; }
.grid .title { background: #d8e4bc; }
.grid .title, .grid .head .k, .grid .name { font: 15px/18px "Liberation Serif", serif; }
.grid .k.sum, .grid .v { font: 12px/16px "Noto Sans", "Open Sans", sans-serif; }
.grid .v { font-size: 13px; }
.grid .flag { background: linear-gradient(135deg, #0a7a1c 4px, transparent 4px); }
.grid .left { text-align: left; padding-left: 2px; vertical-align: bottom; }
.grid .dbl { border-bottom: 3px double #000; vertical-align: bottom; }

.vscroll { display: flex; flex-direction: column; align-items: center; width: 15px; flex: none; background: linear-gradient(90deg, #6d92c4, #83a4d0); }
.vsplit { width: 13px; height: 6px; flex: none; border: 1px solid #5378ad; background: linear-gradient(#fff 50%, #c9dcf5 50%); }
.vscroll button { height: 16px; }
.vtrack { flex: 1; width: 14px; padding-bottom: 54px; }
.vthumb, .hthumb { display: flex; align-items: center; justify-content: center; height: 100%; border: 1px solid #4f6f9f; border-radius: 2px; background: linear-gradient(90deg, #dfe5ee, #f3f6fa 40%, #b9c6da 55%, #d4dfee); }
.grip { width: 8px; height: 8px; background: repeating-linear-gradient(#6f7f99 0 1px, transparent 1px 2px); }

.sheetbar { display: flex; flex: none; height: 15px; margin-right: 20px; background: #7697c6; box-shadow: 20px 0 0 #7b9ed6; }
.navs { display: flex; width: 60px; flex: none; align-items: center; padding-left: 1px; border-right: 1px solid #8ca8d2; border-top: 1px solid #8ca8d2; background: #d3e3f8; }
.navs button { width: 14px; }
.stabs { display: flex; flex: none; width: 698px; padding-left: 5px; background: linear-gradient(90deg, #d3e3f8 30px, #9db9e2 660px); }
.stabs button { overflow: visible; justify-content: flex-start; border-top: 1px solid #7d97bf; background: linear-gradient(#dfeafa, #b9d2f4 50%, #e2edfb); }
.stabs .s62 { width: 62px; }
.stabs .s28 { width: 28px; }
.stabs .s41 { width: 41px; }
.stabs .s35 { width: 35px; }
.stabs .s52 { width: 52px; }
.stabs .s98 { width: 98px; }
.stabs .s134 { width: 134px; }
.stabs .s55 { width: 55px; }
.stabs .s127 { width: 127px; }
.stabs .s33 { width: 33px; }
.stabs .s28 svg, .stabs .s41 svg, .stabs .s35 svg, .stabs .s55 svg { margin-right: -3px; }
.stabs .s127 { gap: 3px; }
.stabs .current { justify-content: center; border-top-color: #fff; border-left: 1px solid #7d97bf; background: #fff; font-weight: 700; }
.hscroll { display: flex; flex: 1; min-width: 0; background: linear-gradient(#6d92c4, #83a4d0); }
.hsplit { width: 5px; flex: none; border: 1px solid #5378ad; background: linear-gradient(90deg, #fff 50%, #c9dcf5 50%); }
.hscroll button { width: 16px; flex: none; }
.htrack { flex: 1; padding-right: 11%; }
.hthumb { background: linear-gradient(#e8edf4, #f3f6fa 30%, #b9c6da 55%, #d4dfee); }
.hthumb .grip { background: repeating-linear-gradient(90deg, #6f7f99 0 1px, transparent 1px 2px); }

.status { display: flex; align-items: stretch; flex: none; height: 22px; border-top: 2px solid #5578b0; background: linear-gradient(#d9e8fb, #c4dbf8 35%, #adc9ee 40%, #c9dff9); }
.ready { display: flex; align-items: center; width: 47px; padding: 0 0 2px 7px; border-right: 1px solid #8eaedb; }
.fillbar { flex: 1; border-left: 1px solid #fff; }
.statright { display: flex; align-items: center; width: 246px; padding: 0 5px 2px 4px; border-left: 1px solid #6289c4; background: linear-gradient(#a6c5f0, #7fa6de 50%, #6d97d3 55%, #8db2e5); }
.views { display: flex; height: 18px; border: 1px solid #6487bf; border-radius: 2px; background: linear-gradient(#bcd3f2, #93b4e2); }
.views button { width: 18px; }
.views .on { background: linear-gradient(#fbdb9f, #fdb953 50%, #fde08a); }
.pc { width: 44px; color: #15285c; }
.zb { width: 18px; flex: none; }
.status input { flex: 1; min-width: 0; height: 18px; margin: 0; appearance: none; background: linear-gradient(transparent 8px, #dce9fb 8px, #dce9fb 9px, #56749f 9px, #56749f 10px, transparent 10px); }
.status input::-webkit-slider-thumb { appearance: none; width: 9px; height: 13px; border: 1px solid #4e648c; border-radius: 1px 1px 5px 5px; background: #e4edfa; }
```
